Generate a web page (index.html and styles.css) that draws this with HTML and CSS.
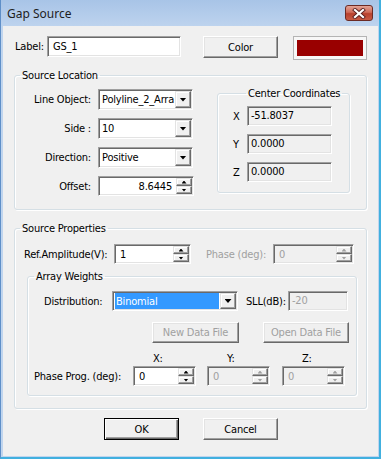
FILE: index.html
```html
<!DOCTYPE html>
<html lang="en">
<head>
    <meta charset="UTF-8">
    <title>Gap Source</title>
    <link rel="stylesheet" href="styles.css">
</head>
<body>
    <div class="window">
        <div class="titlebar">
            <span class="title">Gap Source</span>
            <div class="close-btn">
                <svg width="14" height="11" viewBox="0 0 14 11">
                    <path d="M3 2 L11 9 M11 2 L3 9" stroke="#5a2020" stroke-width="4" stroke-linecap="square"/>
                    <path d="M3 2 L11 9 M11 2 L3 9" stroke="#ffffff" stroke-width="2.2" stroke-linecap="square"/>
                </svg>
            </div>
        </div>

        <div class="client">
            <div class="top-row">
                <span class="lbl lbl-name">Label:</span>
                <div class="edit edit-name">GS_1</div>
                <div class="btn btn-color">Color</div>
                <div class="swatch"><div class="swatch-fill"></div></div>
            </div>

            <fieldset class="group group-location">
                <legend>Source Location</legend>
                <div class="location-body">
                    <div class="location-fields">
                        <div class="field-row">
                            <span class="field-label">Line Object:</span>
                            <div class="combo combo-loc">
                                <span class="combo-text">Polyline_2_Arra</span>
                                <span class="combo-arrow"></span>
                            </div>
                        </div>
                        <div class="field-row">
                            <span class="field-label">Side :</span>
                            <div class="combo combo-loc">
                                <span class="combo-text">10</span>
                                <span class="combo-arrow"></span>
                            </div>
                        </div>
                        <div class="field-row">
                            <span class="field-label">Direction:</span>
                            <div class="combo combo-loc">
                                <span class="combo-text">Positive</span>
                                <span class="combo-arrow"></span>
                            </div>
                        </div>
                        <div class="field-row">
                            <span class="field-label">Offset:</span>
                            <div class="spin spin-offset">
                                <span class="spin-text right">8.6445</span>
                                <span class="spin-btns"><span class="spin-up"></span><span class="spin-down"></span></span>
                            </div>
                        </div>
                    </div>

                    <fieldset class="group group-center">
                        <legend>Center Coordinates</legend>
                        <div class="coord-row">
                            <span class="coord-label">X</span>
                            <div class="edit edit-ro">-51.8037</div>
                        </div>
                        <div class="coord-row">
                            <span class="coord-label">Y</span>
                            <div class="edit edit-ro">0.0000</div>
                        </div>
                        <div class="coord-row">
                            <span class="coord-label">Z</span>
                            <div class="edit edit-ro">0.0000</div>
                        </div>
                    </fieldset>
                </div>
            </fieldset>

            <fieldset class="group group-props">
                <legend>Source Properties</legend>
                <div class="ref-row">
                    <span class="ref-label">Ref.Amplitude(V):</span>
                    <div class="spin spin-ref">
                        <span class="spin-text">1</span>
                        <span class="spin-btns"><span class="spin-up"></span><span class="spin-down"></span></span>
                    </div>
                    <span class="phase-label disabled">Phase (deg):</span>
                    <div class="spin spin-phase is-disabled">
                        <span class="spin-text">0</span>
                        <span class="spin-btns"><span class="spin-up"></span><span class="spin-down"></span></span>
                    </div>
                </div>

                <fieldset class="group group-weights">
                    <legend>Array Weights</legend>
                    <div class="dist-row">
                        <span class="dist-label">Distribution:</span>
                        <div class="combo combo-dist">
                            <span class="combo-text selected">Binomial</span>
                            <span class="combo-arrow"></span>
                        </div>
                        <span class="sll-label">SLL(dB):</span>
                        <div class="edit edit-sll is-disabled">-20</div>
                    </div>
                    <div class="file-row">
                        <div class="btn btn-file is-disabled">New Data File</div>
                        <div class="btn btn-file btn-open is-disabled">Open Data File</div>
                    </div>
                    <div class="axis-row">
                        <span class="axis axis-x">X:</span>
                        <span class="axis axis-y">Y:</span>
                        <span class="axis axis-z">Z:</span>
                    </div>
                    <div class="prog-row">
                        <span class="prog-label">Phase Prog. (deg):</span>
                        <div class="spin spin-prog">
                            <span class="spin-text">0</span>
                            <span class="spin-btns"><span class="spin-up"></span><span class="spin-down"></span></span>
                        </div>
                        <div class="spin spin-prog is-disabled">
                            <span class="spin-text">0</span>
                            <span class="spin-btns"><span class="spin-up"></span><span class="spin-down"></span></span>
                        </div>
                        <div class="spin spin-prog spin-last is-disabled">
                            <span class="spin-text">0</span>
                            <span class="spin-btns"><span class="spin-up"></span><span class="spin-down"></span></span>
                        </div>
                    </div>
                </fieldset>
            </fieldset>

            <div class="dialog-buttons">
                <div class="btn btn-dlg btn-default">OK</div>
                <div class="btn btn-dlg btn-cancel">Cancel</div>
            </div>
        </div>
    </div>
</body>
</html>
```

FILE: styles.css
```css
body {
    margin: 0;
    font-family: 'DejaVu Sans Condensed', 'Liberation Sans', Arial, sans-serif;
    font-size: 11px;
    line-height: 13px;
    letter-spacing: -0.2px;
    color: #000;
}

.window {
    width: 381px;
    height: 459px;
    box-sizing: border-box;
    display: flex;
    flex-direction: column;
    background-color: #c0d5ee;
    border-left: 1px solid #5f8fc8;
    border-right: 2px solid #41b0df;
    border-bottom: 2px solid #41b0df;
}

/* title bar */
.titlebar {
    height: 26px;
    flex: none;
    display: flex;
    align-items: center;
    justify-content: space-between;
    padding: 0 6px 0 6px;
    background: linear-gradient(#a8c4e7, #bdd3ee);
}

.title {
    font-family: 'Noto Sans', 'Open Sans', sans-serif;
    font-size: 12px;
    letter-spacing: normal;
    color: #1e1e1e;
}

.close-btn {
    width: 28px;
    height: 16px;
    box-sizing: border-box;
    border: 1px solid #6b2a24;
    border-radius: 3px;
    background: linear-gradient(#e3a497 0%, #cf6a58 45%, #b8402d 55%, #c75a44 100%);
    display: flex;
    align-items: center;
    justify-content: center;
}

.client {
    flex: 1;
    margin: 0 1px 1px 2px;
    background-color: #f0f0f0;
    padding-top: 10px;
}

/* common controls */
.edit {
    box-sizing: border-box;
    height: 20px;
    background: #fff;
    border: 1px solid;
    border-color: #a0a0a0 #fff #fff #a0a0a0;
    box-shadow: inset 1px 1px #696969, inset -1px -1px #e3e3e3;
    padding: 0 3px;
    line-height: 18px;
    white-space: nowrap;
    overflow: hidden;
}

.edit-ro {
    background: #f0f0f0;
}

.is-disabled,
.disabled {
    color: #a0a0a0;
}

.edit.is-disabled {
    background: #f0f0f0;
}

.btn {
    box-sizing: border-box;
    display: flex;
    align-items: center;
    justify-content: center;
    background: #f0f0f0;
    border: 1px solid;
    border-color: #fff #696969 #696969 #fff;
    box-shadow: inset -1px -1px #a0a0a0, inset 1px 1px #e3e3e3;
}

.combo {
    box-sizing: border-box;
    display: flex;
    height: 21px;
    background: #fff;
    border: 1px solid;
    border-color: #a0a0a0 #fff #fff #a0a0a0;
    box-shadow: inset 1px 1px #696969, inset -1px -1px #e3e3e3;
    padding: 1px;
}

.combo-text {
    flex: 1;
    padding-left: 2px;
    line-height: 17px;
    white-space: nowrap;
    overflow: hidden;
}

.combo-text.selected {
    background: #3399ff;
    color: #fff;
    margin: 0 1px 0 1px;
    padding-left: 1px;
}

.combo-arrow {
    width: 16px;
    flex: none;
    box-sizing: border-box;
    background: #f0f0f0;
    border: 1px solid;
    border-color: #e3e3e3 #696969 #696969 #e3e3e3;
    box-shadow: inset -1px -1px #a0a0a0, inset 1px 1px #fff;
    display: flex;
    align-items: center;
    justify-content: center;
}

.combo-arrow::after {
    content: "";
    width: 7px;
    height: 4px;
    background: #000;
    clip-path: polygon(0 0, 100% 0, 50% 100%);
}

.spin {
    box-sizing: border-box;
    display: flex;
    height: 20px;
    background: #fff;
    border: 1px solid;
    border-color: #a0a0a0 #fff #fff #a0a0a0;
    box-shadow: inset 1px 1px #696969, inset -1px -1px #e3e3e3;
    padding: 1px;
}

.spin.is-disabled {
    background: #f0f0f0;
}

.spin-text {
    flex: 1;
    padding-left: 4px;
    line-height: 17px;
}

.spin-text.right {
    text-align: right;
    padding-right: 4px;
}

.spin-btns {
    width: 16px;
    flex: none;
    display: flex;
    flex-direction: column;
}

.spin-up,
.spin-down {
    flex: 1;
    box-sizing: border-box;
    background: #f0f0f0;
    border: 1px solid;
    border-color: #e3e3e3 #696969 #696969 #e3e3e3;
    box-shadow: inset -1px -1px #a0a0a0, inset 1px 1px #fff;
    display: flex;
    align-items: center;
    justify-content: center;
}

.spin-up::after,
.spin-down::after {
    content: "";
    width: 5px;
    height: 3px;
    background: #000;
}

.spin-up::after {
    clip-path: polygon(50% 0, 100% 100%, 0 100%);
}

.spin-down::after {
    clip-path: polygon(0 0, 100% 0, 50% 100%);
}

.is-disabled .spin-up::after,
.is-disabled .spin-down::after {
    background: #a0a0a0;
}

/* group boxes */
.group {
    box-sizing: border-box;
    margin: 0;
    padding: 0;
    border: 1px solid #d5dfe5;
    border-radius: 3px;
    box-shadow: inset 1px 1px #fff, 1px 1px #fff;
}

.group legend {
    padding: 0 2px;
    line-height: 13px;
}

/* label row */
.top-row {
    display: flex;
    align-items: flex-start;
    padding-left: 12px;
}

.lbl-name {
    width: 32px;
    line-height: 21px;
}

.edit-name {
    width: 134px;
    height: 21px;
    line-height: 19px;
    padding-left: 5px;
}

.btn-color {
    width: 75px;
    height: 22px;
    margin-left: 22px;
}

.swatch {
    width: 74px;
    height: 24px;
    margin-left: 15px;
    box-sizing: border-box;
    border: 1px solid #b4b4b4;
    background: #f7f7f7;
    padding: 3px;
}

.swatch-fill {
    height: 100%;
    background: #990000;
}

/* source location */
.group-location {
    width: 353px;
    margin: 9px 0 0 11px;
    padding-bottom: 13px;
}

.group-location > legend {
    margin-left: 5px;
}

.location-body {
    display: flex;
    align-items: flex-start;
}

.location-fields {
    padding-top: 7px;
    display: flex;
    flex-direction: column;
    gap: 8px;
}

.field-row {
    display: flex;
    align-items: center;
}

.field-label {
    width: 76px;
    margin-right: 7px;
    text-align: right;
}

.combo-loc {
    width: 95px;
}

.spin-offset {
    width: 96px;
}

.group-center {
    width: 133px;
    margin: 5px 0 0 23px;
    padding: 6px 0 10px 15px;
    display: flex;
    flex-direction: column;
    gap: 8px;
}

.group-center > legend {
    margin-left: 13px;
}

.coord-row {
    display: flex;
    align-items: center;
}

.coord-label {
    width: 14px;
}

.coord-row .edit {
    width: 85px;
}

/* source properties */
.group-props {
    width: 353px;
    margin: 12px 0 0 11px;
    padding-bottom: 12px;
}

.group-props > legend {
    margin-left: 5px;
}

.ref-row {
    display: flex;
    align-items: center;
    margin-top: 9px;
    padding-left: 9px;
}

.ref-label {
    width: 90px;
}

.spin-ref {
    width: 77px;
}

.phase-label {
    width: 67px;
    margin-left: 15px;
}

.spin-phase {
    width: 81px;
}

.group-weights {
    width: 330px;
    margin: 6px 0 0 12px;
    padding-bottom: 9px;
}

.group-weights > legend {
    margin-left: 6px;
}

.dist-row {
    display: flex;
    align-items: center;
    margin-top: 8px;
    padding-left: 16px;
}

.dist-label {
    width: 68px;
}

.combo-dist {
    width: 126px;
    height: 20px;
}

.sll-label {
    width: 42px;
    margin-left: 8px;
}

.edit-sll {
    width: 60px;
}

.file-row {
    display: flex;
    margin-top: 11px;
    padding-left: 124px;
}

.btn-file {
    width: 87px;
    height: 21px;
}

.btn-open {
    width: 86px;
    margin-left: 24px;
}

.axis-row {
    display: flex;
    margin-top: 9px;
    padding-left: 125px;
    line-height: 13px;
}

.axis-x {
    width: 74px;
}

.axis-y {
    width: 75px;
}

.prog-row {
    display: flex;
    align-items: center;
    margin-top: 1px;
    padding-left: 6px;
}

.prog-label {
    width: 99px;
}

.spin-prog {
    width: 63px;
    margin-right: 11px;
}

.spin-last {
    margin-left: 1px;
}

/* ok / cancel */
.dialog-buttons {
    display: flex;
    margin-top: 9px;
    padding-left: 101px;
}

.btn-dlg {
    width: 75px;
    height: 22px;
}

.btn-default {
    border: 1px solid #000;
    box-shadow: inset 1px 1px #fff, inset -1px -1px #696969, inset -2px -2px #a0a0a0;
}

.btn-cancel {
    margin-left: 24px;
}
```
